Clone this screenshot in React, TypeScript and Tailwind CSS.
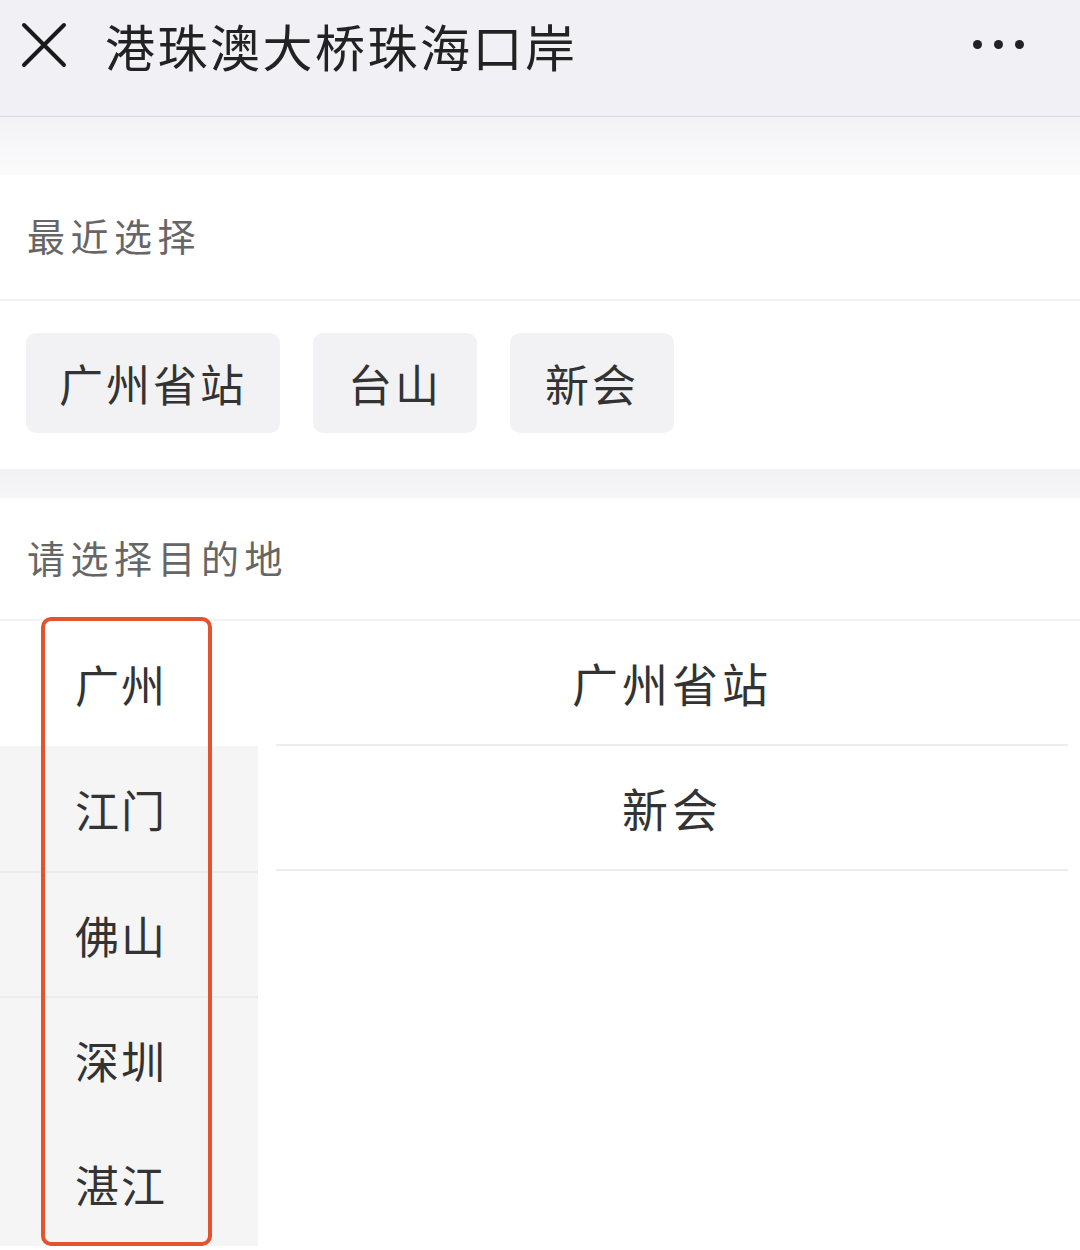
import React from "react";

const font = { fontFamily: '"Noto Sans CJK SC", "Noto Sans", sans-serif' };

export default function App() {
  const cities = ["广州", "江门", "佛山", "深圳", "湛江"];
  return (
    <div className="w-[1080px] h-[1250px] overflow-hidden bg-white text-[#333]" style={font}>
      {/* Header */}
      <div className="h-[117px] bg-[#f1f0f4] border-b border-[#dcdbe0] flex items-start pt-[12px] pl-[20px] pr-[56px]">
        <svg width="48" height="48" viewBox="0 0 48 48" className="mt-[9px]">
          <path d="M4 4 L44 44 M44 4 L4 44" stroke="#1a1a1a" strokeWidth="4" strokeLinecap="round" />
        </svg>
        <div className="ml-[37px] text-[50px] leading-[66px] tracking-[2.5px] text-[#222]">港珠澳大桥珠海口岸</div>
        <div className="ml-auto mt-[28px] flex gap-[12px]">
          <span className="w-[9px] h-[9px] rounded-full bg-[#222]" />
          <span className="w-[9px] h-[9px] rounded-full bg-[#222]" />
          <span className="w-[9px] h-[9px] rounded-full bg-[#222]" />
        </div>
      </div>
      {/* Gap */}
      <div className="h-[58px] bg-gradient-to-b from-[#f3f3f5] to-[#fbfbfc]" />
      {/* Recent */}
      <div className="h-[126px] flex items-center pb-[6px] pl-[27px] text-[38px] tracking-[5.5px] text-[#666] border-b-2 border-[#f2f2f4]">
        最近选择
      </div>
      <div className="h-[168px] flex items-start pt-[32px] pl-[26px] gap-[33px]">
        <div className="w-[254px] h-[100px] rounded-[10px] bg-[#f2f2f4] flex items-center justify-center text-[44px] tracking-[3px]">广州省站</div>
        <div className="w-[164px] h-[100px] rounded-[10px] bg-[#f2f2f4] flex items-center justify-center text-[44px] tracking-[3px]">台山</div>
        <div className="w-[164px] h-[100px] rounded-[10px] bg-[#f2f2f4] flex items-center justify-center text-[44px] tracking-[3px]">新会</div>
      </div>
      <div className="h-[29px] bg-gradient-to-b from-[#f2f2f4] to-[#f6f6f8]" />
      {/* Choose destination */}
      <div className="h-[123px] flex items-center pb-[4px] pl-[27px] text-[38px] tracking-[5.5px] text-[#666] border-b-2 border-[#f2f2f4]">
        请选择目的地
      </div>
      <div className="flex relative">
        <div className="w-[258px] flex flex-col">
          {cities.map((c, i) => (
            <div
              key={c}
              className={
                "h-[125px] flex items-center pl-[75px] text-[44px] tracking-[2px] text-[#333] " +
                (i === 0 ? "bg-white" : "bg-[#f5f5f6]") +
                (i === 2 || i === 3 ? " border-t-2 border-[#ececee]" : "")
              }
            >
              {c}
            </div>
          ))}
        </div>
        <div className="flex-1 pl-[18px] pr-[12px]">
          <div className="h-[125px] flex items-center justify-center text-[46px] tracking-[4px] border-b-2 border-[#ededef]">广州省站</div>
          <div className="h-[125px] flex items-center justify-center text-[46px] tracking-[4px] border-b-2 border-[#ededef]">新会</div>
        </div>
        <div className="absolute left-[41px] top-[-4px] w-[171px] h-[629px] border-[4px] border-[#e2532f] rounded-[10px]" />
      </div>
    </div>
  );
}
